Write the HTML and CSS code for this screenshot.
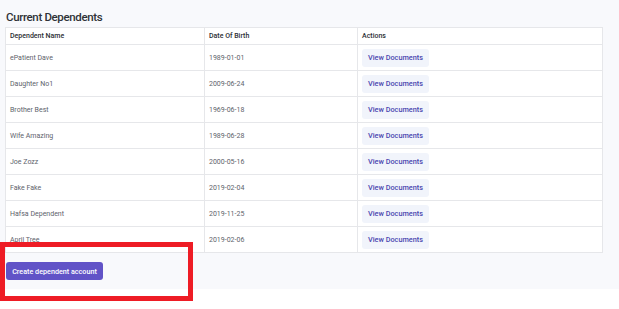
FILE: index.html
```html
<!DOCTYPE html>
<html lang="en">
<head>
    <meta charset="UTF-8">
    <meta name="viewport" content="width=device-width, initial-scale=1.0">
    <title>Current Dependents</title>
    <link rel="stylesheet" href="styles.css">
</head>
<body>
    <div class="page">
        <h1>Current Dependents</h1>
        <table class="dependents">
            <thead>
                <tr>
                    <th class="col-name">Dependent Name</th>
                    <th class="col-dob">Date Of Birth</th>
                    <th>Actions</th>
                </tr>
            </thead>
            <tbody>
                <tr><td>ePatient Dave</td><td>1989-01-01</td><td><button class="docs">View Documents</button></td></tr>
                <tr><td>Daughter No1</td><td>2009-06-24</td><td><button class="docs">View Documents</button></td></tr>
                <tr><td>Brother Best</td><td>1969-06-18</td><td><button class="docs">View Documents</button></td></tr>
                <tr><td>Wife Amazing</td><td>1989-06-28</td><td><button class="docs">View Documents</button></td></tr>
                <tr><td>Joe Zozz</td><td>2000-05-16</td><td><button class="docs">View Documents</button></td></tr>
                <tr><td>Fake Fake</td><td>2019-02-04</td><td><button class="docs">View Documents</button></td></tr>
                <tr><td>Hafsa Dependent</td><td>2019-11-25</td><td><button class="docs">View Documents</button></td></tr>
                <tr><td>April Tree</td><td>2019-02-06</td><td><button class="docs">View Documents</button></td></tr>
            </tbody>
        </table>
        <button class="create">Create dependent account</button>
    </div>
    <div class="highlight"></div>
</body>
</html>
```

FILE: styles.css
```css
body {
    margin: 0;
    min-height: 309px;
    background-color: #fff;
    font-family: Roboto, "Liberation Sans", sans-serif;
    position: relative;
}

.page {
    background-color: #f8f9fc;
    height: 289px;
    padding: 7px 16px 0 5px;
    box-sizing: border-box;
}

h1 {
    margin: 0 0 0 1px;
    font-size: 11.5px;
    font-weight: 500;
    letter-spacing: -0.35px;
    line-height: 20px;
    color: #2f3237;
}

.dependents {
    width: 598px;
    border-collapse: collapse;
    background-color: #fff;
    font-size: 7px;
}

.dependents th,
.dependents td {
    border: 1px solid #e6e7ea;
    text-align: left;
    padding: 0 0 0 4px;
    white-space: nowrap;
}

.dependents th {
    height: 16px;
    font-weight: 500;
    color: #2b2e33;
}

.dependents td {
    height: 25px;
    color: #60636b;
}

.col-name {
    width: 194px;
}

.col-dob {
    width: 148px;
}

.docs {
    font-family: inherit;
    font-size: 7.3px;
    font-weight: 500;
    color: #4b47b0;
    background-color: #f1f4fb;
    border: none;
    border-radius: 3px;
    height: 18px;
    width: 67px;
    padding: 0;
    white-space: nowrap;
}

.create {
    margin: 9px 0 0 1px;
    font-family: inherit;
    font-size: 7.2px;
    font-weight: 500;
    color: #fff;
    background-color: #6153c7;
    border: none;
    border-radius: 3px;
    height: 18px;
    width: 97px;
    padding: 0;
    white-space: nowrap;
}

/* annotation box drawn over the page */
.highlight {
    position: absolute;
    left: 0;
    top: 242px;
    width: 183px;
    height: 49px;
    border: 5px solid #ee1c25;
}
```
